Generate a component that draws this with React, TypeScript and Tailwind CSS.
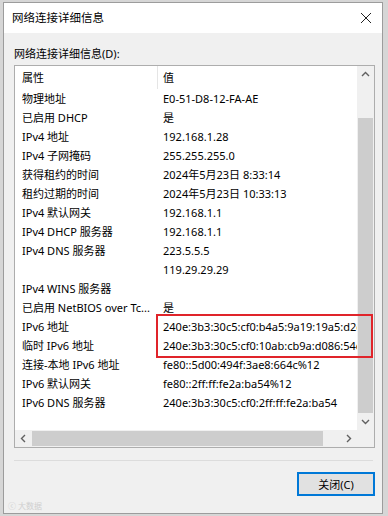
const rows: [string, string][] = [
  ["物理地址", "E0-51-D8-12-FA-AE"],
  ["已启用 DHCP", "是"],
  ["IPv4 地址", "192.168.1.28"],
  ["IPv4 子网掩码", "255.255.255.0"],
  ["获得租约的时间", "2024年5月23日 8:33:14"],
  ["租约过期的时间", "2024年5月23日 10:33:13"],
  ["IPv4 默认网关", "192.168.1.1"],
  ["IPv4 DHCP 服务器", "192.168.1.1"],
  ["IPv4 DNS 服务器", "223.5.5.5"],
  ["", "119.29.29.29"],
  ["IPv4 WINS 服务器", ""],
  ["已启用 NetBIOS over Tc...", "是"],
  ["IPv6 地址", "240e:3b3:30c5:cf0:b4a5:9a19:19a5:d2d1"],
  ["临时 IPv6 地址", "240e:3b3:30c5:cf0:10ab:cb9a:d086:54e0"],
  ["连接-本地 IPv6 地址", "fe80::5d00:494f:3ae8:664c%12"],
  ["IPv6 默认网关", "fe80::2ff:ff:fe2a:ba54%12"],
  ["IPv6 DNS 服务器", "240e:3b3:30c5:cf0:2ff:ff:fe2a:ba54"],
];

function Chevron({ dir }: { dir: "up" | "down" | "left" | "right" }) {
  const d = {
    up: "M1 6 L4.5 2.5 L8 6",
    down: "M1 3 L4.5 6.5 L8 3",
    left: "M6 1 L2.5 4.5 L6 8",
    right: "M3 1 L6.5 4.5 L3 8",
  }[dir];
  return (
    <svg width="9" height="9" viewBox="0 0 9 9" fill="none">
      <path d={d} stroke="#606060" strokeWidth="1.4" />
    </svg>
  );
}

export default function App() {
  return (
    <div className="w-[388px] h-[516px] bg-[#d6d6d6] pt-[2px] pl-[3px] font-['Noto_Sans','Noto_Sans_CJK_SC',sans-serif] text-[11px] text-black leading-none">
      <div className="w-[380px] h-[512px] border border-[#9c9c9c] bg-[#f0f0f0] flex flex-col">
        {/* title bar */}
        <div className="h-[30px] bg-white flex items-center justify-between pl-[8px] pr-[10px]">
          <span className="text-[11.5px]">网络连接详细信息</span>
          <svg width="12" height="12" viewBox="0 0 12 12">
            <path d="M1 1 L11 11 M11 1 L1 11" stroke="#222" strokeWidth="1" />
          </svg>
        </div>

        <div className="flex flex-col pl-[10px] pr-[7px]">
          <div className="h-[32px] flex items-end pb-[6px]">网络连接详细信息(D):</div>

          {/* list view */}
          <div className="relative w-[361px] h-[383px] border border-[#adadad] bg-white flex flex-col">
            <div className="flex flex-1 min-h-0">
              <div className="flex-1 overflow-hidden">
                <div className="w-[520px]">
                  <div className="h-[23px] flex items-center">
                    <div className="w-[143px] h-full flex items-center pl-[7px] border-r border-[#e5e5e5]">属性</div>
                    <div className="pl-[5px]">值</div>
                  </div>
                  {rows.map(([k, v], i) => (
                    <div key={i} className="h-[19px] flex items-center whitespace-nowrap">
                      <div className="w-[143px] pl-[7px]">{k}</div>
                      <div className="pl-[5px]">{v}</div>
                    </div>
                  ))}
                </div>
              </div>
              {/* vertical scrollbar */}
              <div className="w-[17px] bg-[#f0f0f0] flex flex-col">
                <div className="h-[17px] flex items-center justify-center">
                  <Chevron dir="up" />
                </div>
                <div className="flex-1 pt-[35px]">
                  <div className="h-full mx-[1px] bg-[#cdcdcd]" />
                </div>
                <div className="h-[17px] flex items-center justify-center">
                  <Chevron dir="down" />
                </div>
              </div>
            </div>
            {/* horizontal scrollbar */}
            <div className="h-[17px] flex">
              <div className="flex-1 bg-[#f0f0f0] flex">
                <div className="w-[17px] flex items-center justify-center">
                  <Chevron dir="left" />
                </div>
                <div className="flex-1 py-[1px] pr-[17px]">
                  <div className="h-full bg-[#cdcdcd]" />
                </div>
                <div className="w-[17px] flex items-center justify-center">
                  <Chevron dir="right" />
                </div>
              </div>
              <div className="w-[17px] bg-[#f0f0f0]" />
            </div>

            {/* annotation */}
            <div className="absolute left-[141px] top-[248px] w-[217px] h-[44px] border-2 border-[#e0242a]" />
          </div>

          <div className="mt-[12px] h-px bg-[#dcdcdc] mr-[2px]" />

          <div className="flex justify-end mt-[11px]">
            <div className="w-[78px] h-[24px] border-2 border-[#0078d7] bg-[#e1e1e1] flex items-center justify-center">
              关闭(C)
            </div>
          </div>
        </div>

        <div className="mt-auto mb-[3px] ml-[4px] text-[8px] text-[#cfcfcf]">ⓒ 大数据</div>
      </div>
    </div>
  );
}
